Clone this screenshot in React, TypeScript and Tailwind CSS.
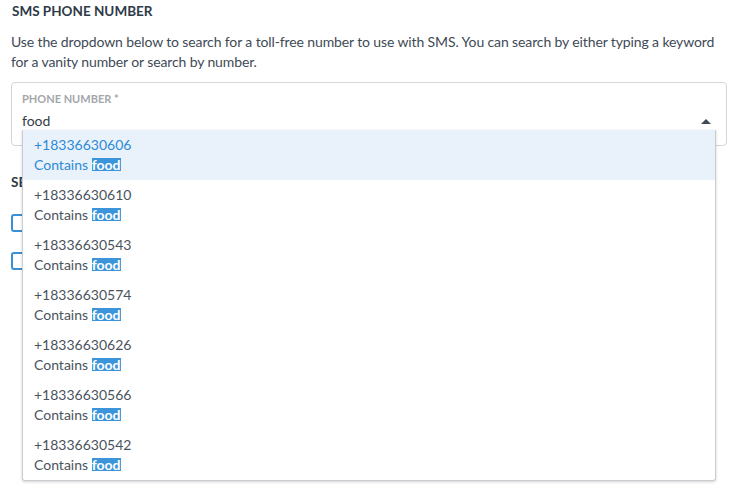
import React from "react";

const OPTIONS = [
  "+18336630606",
  "+18336630610",
  "+18336630543",
  "+18336630574",
  "+18336630626",
  "+18336630566",
  "+18336630542",
];

export default function App() {
  const [active] = React.useState(0);

  return (
    <div className="w-[738px] h-[493px] bg-white overflow-hidden font-['Lato','Noto_Sans',sans-serif] text-[#3a4550]">
      <div className="px-[11px] pt-[1px]">
        <h2 className="text-[13.5px] font-bold text-[#2e3a47] leading-[20px] pl-[1px]">
          SMS PHONE NUMBER
        </h2>
        <p className="mt-[11px] text-[14px] tracking-[-0.12px] leading-[20px] text-[#3e4a56]">
          Use the dropdown below to search for a toll-free number to use with SMS. You can search by either typing a keyword for a vanity number or search by number.
        </p>

        <div className="relative mt-[10px] w-[716px]">
          <div className="h-[64px] rounded-[4px] border border-[#d3d6da] px-[10px] pt-[9px]">
            <div className="text-[11px] font-bold uppercase text-[#a3a7ab] leading-[14px]">
              Phone Number *
            </div>
            <div className="flex items-center justify-between mt-[5px]">
              <span className="text-[14px] leading-[20px] text-[#333c45]">food</span>
              <svg width="10" height="5" viewBox="0 0 10 5" className="mr-[5px]">
                <path d="M0 5 L5 0 L10 5 Z" fill="#3e4a56" />
              </svg>
            </div>
          </div>

          {/* dropdown menu over the content below */}
          <ul className="absolute left-[11px] top-[48px] z-10 w-[694px] bg-white border border-[#c9cdd1] border-t-0 rounded-b-[3px] shadow-[0_1px_3px_rgba(0,0,0,0.18)]">
            {OPTIONS.map((num, i) => (
              <li
                key={num}
                className={
                  i === active
                    ? "h-[50px] px-[11px] pt-[5px] bg-[#e9f2fa] text-[#2d8ad6]"
                    : "h-[50px] px-[11px] pt-[5px] text-[#4a535c]"
                }
              >
                <div className="text-[14px] leading-[20px]">{num}</div>
                <div className="text-[14px] leading-[20px]">
                  Contains{" "}
                  <span className="bg-[#3c94da] text-white font-bold leading-[13px] inline-block">food</span>
                </div>
              </li>
            ))}
          </ul>
        </div>

        <h2 className="mt-[26px] text-[13.5px] font-bold text-[#2e3a47] leading-[20px]">
          SENDER SETTINGS
        </h2>
        <div className="mt-[22px] flex flex-col gap-[20px]">
          <span className="w-[18px] h-[18px] rounded-[3px] border-2 border-[#3b8fd5] bg-white" />
          <span className="w-[18px] h-[18px] rounded-[3px] border-2 border-[#3b8fd5] bg-white" />
        </div>
      </div>
    </div>
  );
}
